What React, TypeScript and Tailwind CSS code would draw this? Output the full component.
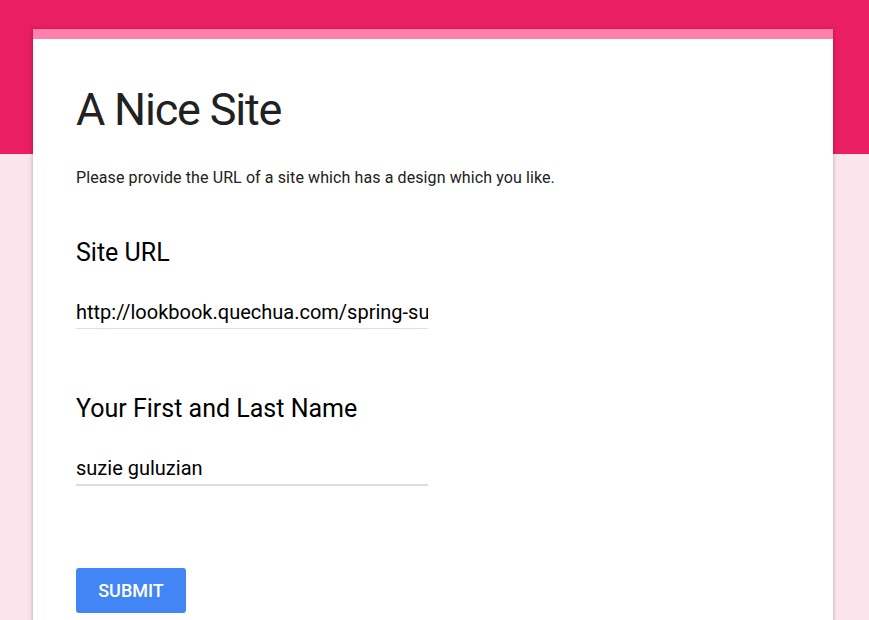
export default function App() {
  return (
    <div className="min-h-[620px] bg-[#fce4ec] font-['Roboto',sans-serif] text-[#212121]">
      <div className="h-[154px] bg-[#e91e63]" />
      <div className="-mt-[125px] px-[33px] pb-10">
        <div className="w-[800px] bg-white shadow-[0_1px_4px_rgba(0,0,0,0.3)]">
          <div className="h-[10px] bg-[#ff80ab]" />
          <div className="px-[43px] pt-[41px] pb-10">
            <h1 className="text-[45px] leading-[60px] font-normal tracking-[-1.2px]">A Nice Site</h1>
            <p className="mt-[28px] text-[16px] leading-[20px] tracking-[0.1px]">
              Please provide the URL of a site which has a design which you like.
            </p>
            <div className="mt-[50px]">
              <label className="block text-[25px] leading-[30px] text-black">Site URL</label>
              <input
                className="mt-[31px] block w-[352px] border-b border-[#e0e0e0] pb-[3px] text-[20px] leading-[26px] text-black outline-none"
                defaultValue="http://lookbook.quechua.com/spring-summer-2017"
              />
            </div>
            <div className="mt-[65px]">
              <label className="block text-[25px] leading-[30px] text-black">Your First and Last Name</label>
              <input
                className="mt-[31px] block w-[352px] border-b-2 border-[#dddddd] pb-[3px] text-[20px] leading-[26px] text-black outline-none"
                defaultValue="suzie guluzian"
              />
            </div>
            <button className="mt-[82px] h-[45px] w-[110px] rounded-[3px] bg-[#4285f4] text-[18px] font-medium text-white">
              SUBMIT
            </button>
          </div>
        </div>
      </div>
    </div>
  );
}
